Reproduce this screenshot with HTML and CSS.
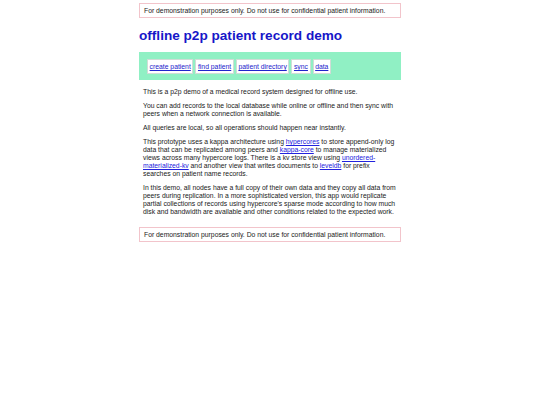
FILE: index.html
```html
<!DOCTYPE html>
<html>
<head>
<meta charset="utf-8">
<link rel="stylesheet" href="styles.css">
</head>
<body>
<div class="page">
  <div class="notice">For demonstration purposes only. Do not use for confidential patient information.</div>
  <h1 class="title">offline p2p patient record demo</h1>
  <nav class="nav">
    <a href="#">create patient</a>
    <a href="#">find patient</a>
    <a href="#">patient directory</a>
    <a href="#">sync</a>
    <a href="#">data</a>
  </nav>
  <div class="content">
    <p>This is a p2p demo of a medical record system designed for offline use.</p>
    <p>You can add records to the local database while online or offline and then sync with peers when a network connection is available.</p>
    <p>All queries are local, so all operations should happen near instantly.</p>
    <p>This prototype uses a kappa architecture using <a href="#">hypercores</a> to store append-only log data that can be replicated among peers and <a href="#">kappa-core</a> to manage materialized views across many hypercore logs. There is a kv store view using <a href="#">unordered-materialized-kv</a> and another view that writes documents to <a href="#">leveldb</a> for prefix searches on patient name records.</p>
    <p>In this demo, all nodes have a full copy of their own data and they copy all data from peers during replication. In a more sophisticated version, this app would replicate partial collections of records using hypercore's sparse mode according to how much disk and bandwidth are available and other conditions related to the expected work.</p>
  </div>
  <div class="notice">For demonstration purposes only. Do not use for confidential patient information.</div>
</div>
</body>
</html>
```

FILE: styles.css
```css
html, body {
  margin: 0;
  padding: 0;
  background: #ffffff;
}
body {
  font-family: "Liberation Sans", Arial, sans-serif;
  font-size: 6.8px;
  line-height: 8px;
  color: #1a1a1a;
}
.page {
  width: 262px;
  margin: 3px auto 0;
}
.notice {
  border: 1px solid #f2c4cb;
  padding: 3px 4px 2px;
}
.title {
  font-size: 13.6px;
  line-height: 17px;
  font-weight: bold;
  color: #1616c8;
  margin: 9px 0 8px;
}
.nav {
  background: #90f0c4;
  padding: 7px 8px 6px;
  display: flex;
  gap: 2px;
}
.nav a {
  display: block;
  background: #ffffff;
  border: 1px solid #d0dcd6;
  padding: 2px 1.6px;
  line-height: 9px;
  font-size: 6.8px;
  color: #2222cc;
}
.content {
  padding: 8px 4px 5px;
}
.content p {
  margin: 0 0 6px;
}
.content a {
  color: #2222dd;
}
```
